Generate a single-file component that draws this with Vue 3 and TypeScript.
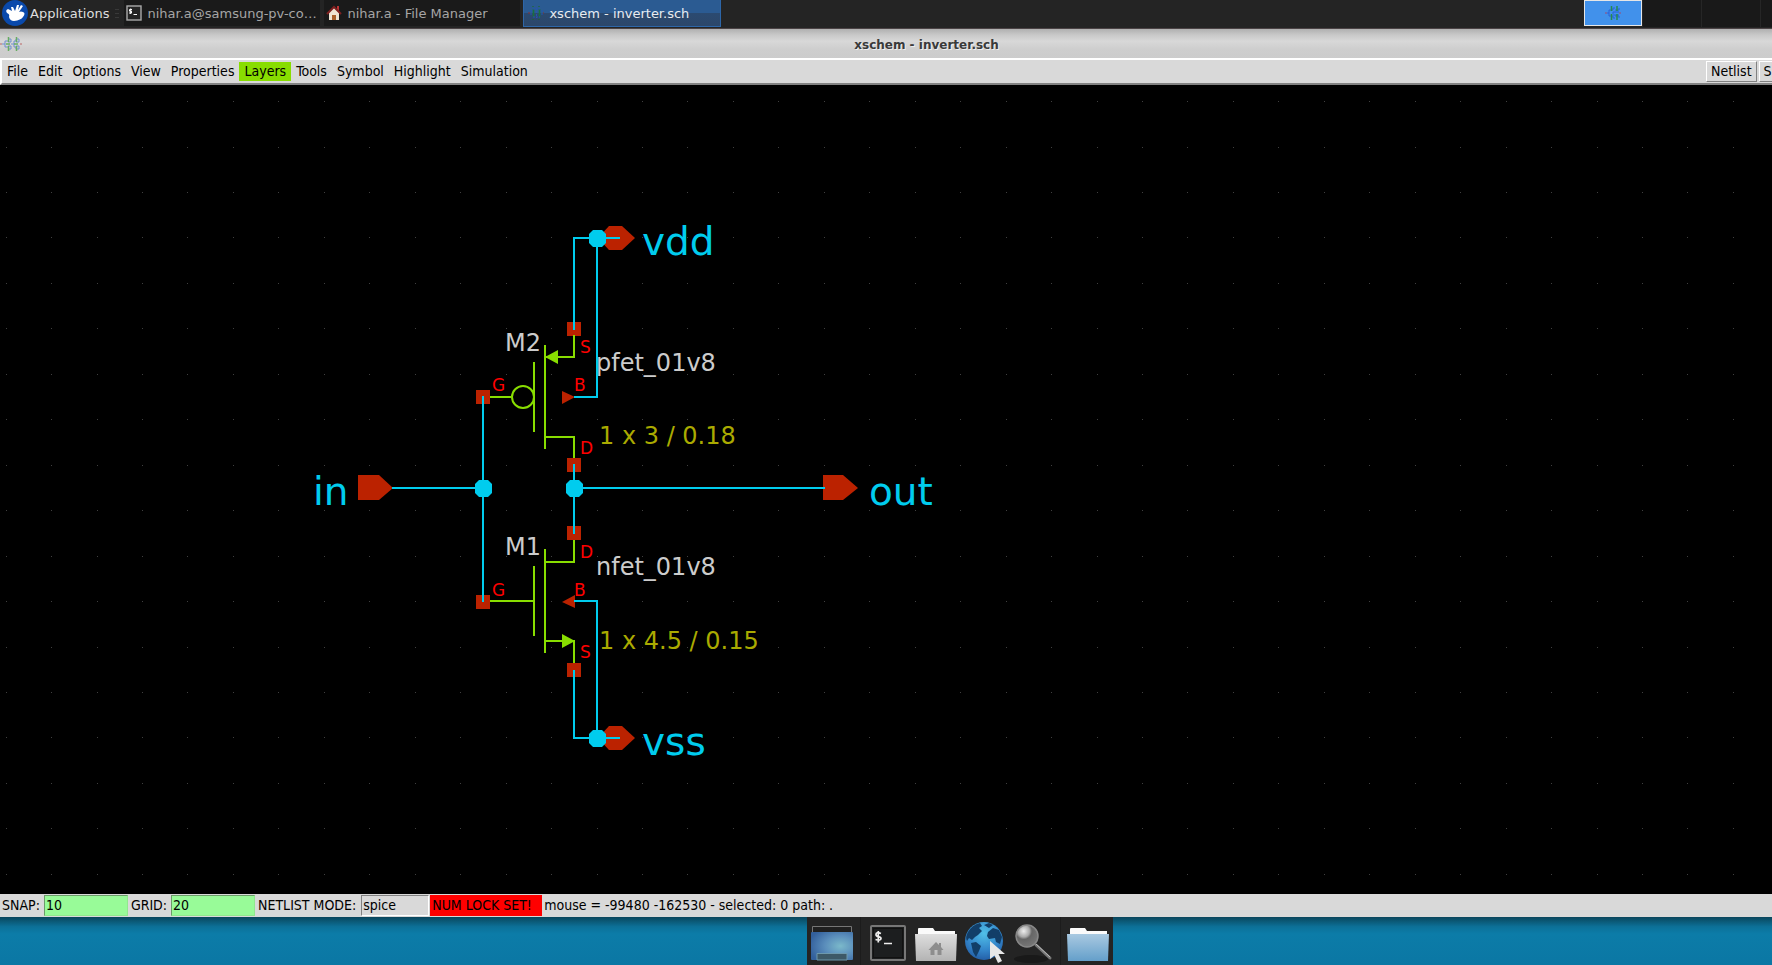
<script setup lang="ts">
interface Label { x: number; y: number; t: string; c: string }

const menus: string[] = ['File', 'Edit', 'Options', 'View', 'Properties', 'Layers', 'Tools', 'Symbol', 'Highlight', 'Simulation']

const labels: Label[] = [
  { x: 642, y: 255, t: 'vdd', c: 'net' },
  { x: 642, y: 755, t: 'vss', c: 'net' },
  { x: 313, y: 505, t: 'in', c: 'net' },
  { x: 869, y: 505, t: 'out', c: 'net' },
  { x: 505, y: 351, t: 'M2', c: 'name' },
  { x: 505, y: 555, t: 'M1', c: 'name' },
  { x: 596, y: 371, t: 'pfet_01v8', c: 'name' },
  { x: 596, y: 575, t: 'nfet_01v8', c: 'name' },
  { x: 599, y: 444, t: '1 x 3 / 0.18', c: 'size' },
  { x: 599, y: 649, t: '1 x 4.5 / 0.15', c: 'size' },
  { x: 580, y: 353, t: 'S', c: 'pin' },
  { x: 574, y: 391, t: 'B', c: 'pin' },
  { x: 492, y: 391, t: 'G', c: 'pin' },
  { x: 580, y: 454, t: 'D', c: 'pin' },
  { x: 580, y: 558, t: 'D', c: 'pin' },
  { x: 574, y: 596, t: 'B', c: 'pin' },
  { x: 492, y: 596, t: 'G', c: 'pin' },
  { x: 580, y: 658, t: 'S', c: 'pin' },
]

const pads: [number, number][] = [[567, 322], [567, 458], [476, 390], [567, 526], [567, 663], [476, 595]]
const junctions: [number, number][] = [[597, 238], [483, 488], [574, 488], [597, 738]]

const step = 500 / 11
const dots: string = Array.from({ length: 18 }, (_, r) =>
  Array.from({ length: 60 }, (_, c) => `M${Math.floor(6.1 + c * step)} ${Math.floor(101.6 + r * step)}h1v1h-1z`).join(''),
).join('')
</script>

<template>
  <div class="screen">
    <header class="panel">
      <button class="apps">
        <svg width="26" height="26" viewBox="0 0 26 26" aria-hidden="true">
          <circle cx="13" cy="13" r="13" fill="#0a49ab" />
          <path d="M6 9Q3 10 5 13Q8 14 7 17Q8 21 12 21Q19 20 21 17Q24 13 21 12Q19 11 17 12L21 6L19 5L16 10L17 5L15 5L13 11L11 7L9 7L10 11Z" fill="#fff" />
        </svg>
        <span>Applications</span>
      </button>
      <i class="grip"></i>
      <button class="task">
        <svg width="16" height="16" viewBox="0 0 16 16" aria-hidden="true">
          <rect x="1" y="1" width="14" height="14" fill="#252525" stroke="#aaa" stroke-width="1.4" />
          <path d="M6 4.5H3.500V6.200H5.500V8H3M4.700 3.500V9M7.500 9.500H11" stroke="#fff" fill="none" />
        </svg>
        <span>nihar.a@samsung-pv-co…</span>
      </button>
      <button class="task t2">
        <svg width="16" height="16" viewBox="0 0 16 16" aria-hidden="true">
          <path d="M11 1h2v5h-2z" fill="#b33" />
          <path d="M3 7L8 2L13 7V15H3Z" fill="#eee4d4" />
          <path d="M1 9L8 2L15 9" fill="none" stroke="#7e2020" stroke-width="2" />
          <path d="M6 10h4v5H6z" fill="#a8602c" />
        </svg>
        <span>nihar.a - File Manager</span>
      </button>
      <button class="task active">
        <svg width="16" height="16" viewBox="0 0 16 16" aria-hidden="true">
          <path d="M5.500 4v8M11.500 4v8" stroke="#187040" stroke-width="1.600" fill="none" />
          <path d="M3 5v6M8.500 3v10M14 5v6M5 4h7M5 12h7" stroke="#2454b0" fill="none" stroke-dasharray="2 1" />
          <path d="M5 1v1M11 1v1M5 14v1M11 14v1" stroke="#187018" />
          <path d="M0 8h2M15 8h1" stroke="#833" />
        </svg>
        <span>xschem - inverter.sch</span>
      </button>
      <div class="pager">
        <button class="ws on" aria-label="Workspace 1">
          <svg width="16" height="16" viewBox="0 0 16 16" aria-hidden="true">
            <path d="M2 8H4M4 5V11M4 5H8V3H10M4 11H8V13H10M8 7V9M10 5H14V3M10 11H14V13M8 7H14M8 10H14" stroke="#2961d8" fill="none" />
            <path d="M6.500 1V6M6.500 9V15M12 1V6M12 9V15" stroke="#268a50" stroke-width="1.500" />
            <path d="M0 8h2M14 8h2" stroke="#a34b70" />
          </svg>
        </button>
        <button class="ws" aria-label="Workspace 2"></button>
        <button class="ws" aria-label="Workspace 3"></button>
        <button class="ws last" aria-label="Workspace 4"></button>
      </div>
    </header>

    <div class="titlebar">
      <svg width="22" height="16" viewBox="0 0 22 16" aria-hidden="true">
        <path d="M2 8H5M5 5V11M5 5H8M5 11H8M8 3H11V6H8M8 10H11V13H8M11 8H14M14 5V11M14 5H16V3H19V6H16M14 11H16V13H19V10H16" stroke="#6f8fce" fill="none" />
        <path d="M8.500 1V6M8.500 10V15M16.500 1V6M16.500 10V15M6 8H10M14 8H18" stroke="#67ad62" stroke-width="1.500" />
        <path d="M0 8h2M20 8h2" stroke="#b66" />
      </svg>
      <h1>xschem - inverter.sch</h1>
    </div>

    <nav class="menubar">
      <button v-for="m in menus" :key="m" class="menu" :class="{ hot: m === 'Layers' }">{{ m }}</button>
      <div class="tools">
        <button class="raised">Netlist</button>
        <button class="raised">S</button>
      </div>
    </nav>

    <main class="canvas">
      <svg class="schematic" role="img" aria-label="Inverter schematic">
        <g transform="translate(0 -85)">
          <path :d="dots" fill="#404040" shape-rendering="crispEdges" />

          <g class="pinfill">
            <rect v-for="(p, i) in pads" :key="i" :x="p[0]" :y="p[1]" width="14" height="14" />
            <path d="M358 475H379L393 488L379 500H358Z" />
            <path d="M823 475H843L858 488L843 500H823Z" />
            <path d="M598 238L609 226H622L635 238L622 250H609Z" />
            <path d="M598 738L609 726H622L635 738L622 750H609Z" />
            <path d="M562 391L575 397L562 404Z" />
            <path d="M575 595L562 602L575 608Z" />
          </g>

          <g class="device">
            <path d="M545 345V449M534 362V432M574 335V357H545M545 437H574V458M490 397H511" />
            <circle cx="523" cy="397" r="11" />
            <path d="M545 549V653M534 566V636M574 540V562H545M545 641H574V663M490 601H534" />
          </g>
          <path d="M545 357L558 350V364ZM562 634L575 641L562 648Z" fill="#88dd00" />

          <g class="wire">
            <path d="M574 330V238H620M597 238V397H574M392 488H483M483 396V602M574 464V534M574 488H825" />
            <path d="M574 601H597V738M574 670V738H620" />
          </g>
          <path
            v-for="(j, i) in junctions" :key="'j' + i" fill="#00ccee"
            :d="`M${j[0] - 4} ${j[1] - 8}h9l4 4v9l-4 4h-9l-4 -4v-9z`"
          />

          <text v-for="(l, i) in labels" :key="'t' + i" :x="l.x" :y="l.y" :class="l.c">{{ l.t }}</text>
        </g>
      </svg>
    </main>

    <div class="status">
      <label for="snap">SNAP:</label>
      <input id="snap" type="text" value="10">
      <label for="grid">GRID:</label>
      <input id="grid" type="text" value="20">
      <label for="mode">NETLIST MODE:</label>
      <input id="mode" class="mode" type="text" value="spice" readonly>
      <span class="numlock">NUM LOCK SET!</span>
      <span class="mouse">mouse = -99480 -162530 - selected: 0 path: .</span>
    </div>

    <footer class="desktop">
      <nav class="dock">
        <button aria-label="Show desktop">
          <svg width="48" height="48" viewBox="0 0 48 48" aria-hidden="true">
            <defs>
              <radialGradient id="desk" cx=".7" cy=".5" r=".75"><stop offset="0" stop-color="#7bb9ca" /><stop offset=".5" stop-color="#5a8dbb" /><stop offset="1" stop-color="#33609c" /></radialGradient>
            </defs>
            <path d="M4.500 18V9.500H43.500V18" fill="#202020" stroke="#777" />
            <rect x="3" y="15" width="42" height="28" rx="1" fill="url(#desk)" />
            <path d="M9 43V36.500H39V43Z" fill="#3d5967" stroke="#6d98ac" />
          </svg>
        </button>
        <i class="sep"></i>
        <button aria-label="Terminal">
          <svg width="48" height="48" viewBox="0 0 48 48" aria-hidden="true">
            <rect x="7" y="9" width="34" height="34" rx="1" fill="#1c1e1f" stroke="#777" stroke-width="2" />
            <rect x="9.500" y="11.500" width="29" height="29" fill="none" stroke="#111" />
            <path d="M17 16.500Q12 14.500 12 17.500Q12 19.300 14.500 19.700Q17 20.200 17 21.500Q17 24 11.500 22.500M14.300 14V25.500M20 26.500H28" stroke="#eee" stroke-width="1.700" fill="none" />
          </svg>
        </button>
        <button aria-label="Home folder">
          <svg width="48" height="48" viewBox="0 0 48 48" aria-hidden="true">
            <defs><linearGradient id="grey" x2="0" y2="1"><stop offset="0" stop-color="#dedede" /><stop offset="1" stop-color="#b3b3b3" /></linearGradient></defs>
            <path d="M6 18V12Q6 11 7 11H21L23 14H43V18Z" fill="#fafafa" />
            <path d="M3 17H45L44 44H4Z" fill="url(#grey)" />
            <path d="M16.500 33L24 25L27 28V26H29V30L31.500 33H29.500V38H25.500V33H22.500V38H18.500V33Z" fill="#8d8d8d" />
          </svg>
        </button>
        <button aria-label="Web browser">
          <svg width="48" height="48" viewBox="0 0 48 48" aria-hidden="true">
            <defs><radialGradient id="sea" cx=".5" cy=".3" r=".7"><stop offset="0" stop-color="#51c0e8" /><stop offset=".6" stop-color="#3488cc" /><stop offset="1" stop-color="#2460a8" /></radialGradient></defs>
            <circle cx="24" cy="24" r="19" fill="url(#sea)" />
            <path d="M8 15Q12 8 20 6L22 9L19 11L22 14L18 18L15 20L12 23L9 21L7 24Q5 20 8 15ZM11 26L16 25L21 29L19 34L16 40L13 35ZM24 8L29 6L33 8L29 11ZM28 15L33 11L39 13L42 20L40 27L36 25L35 21L29 22L27 19Z" fill="#123e68" />
            <path d="M30 24V42L34.500 38.500L38 46L42 44L38.500 37H45Z" fill="#e7e7e7" />
          </svg>
        </button>
        <button aria-label="Search">
          <svg width="48" height="48" viewBox="0 0 48 48" aria-hidden="true">
            <defs><radialGradient id="lens" cx=".35" cy=".28" r=".75"><stop offset="0" stop-color="#eee" /><stop offset=".35" stop-color="#aaa" /><stop offset=".5" stop-color="#666" /><stop offset="1" stop-color="#777" /></radialGradient></defs>
            <ellipse cx="23" cy="42" rx="17" ry="4" fill="#191919" />
            <path d="M28 28L42 41" stroke="#777" stroke-width="3" stroke-linecap="round" />
            <path d="M28 27L42 40" stroke="#bbb" />
            <circle cx="19" cy="19" r="11" fill="url(#lens)" stroke="#888" stroke-width="1.500" />
          </svg>
        </button>
        <i class="sep"></i>
        <button aria-label="Files">
          <svg width="48" height="48" viewBox="0 0 48 48" aria-hidden="true">
            <defs><linearGradient id="blue" x2="0" y2="1"><stop offset="0" stop-color="#a9c9e1" /><stop offset="1" stop-color="#649fca" /></linearGradient></defs>
            <path d="M6 18V12Q6 11 7 11H21L23 14H43V18Z" fill="#fafafa" />
            <path d="M3 17H45L44 44H4Z" fill="url(#blue)" />
          </svg>
        </button>
      </nav>
    </footer>
  </div>
</template>

<style>
html, body { margin: 0; background: #0a7aa5; overflow: hidden; }
</style>

<style scoped>
.screen { min-height: 100vh; display: flex; flex-direction: column; font-family: "DejaVu Sans", sans-serif; font-size: 13px; color: #000; overflow: hidden; }
button { border: 0; margin: 0; padding: 0; background: none; font: inherit; color: inherit; white-space: nowrap; }
svg { display: block; flex: none; }

.panel { height: 29px; box-sizing: border-box; display: flex; background: #242424; border-bottom: 1px solid #4c4446; color: #dedede; }
.apps { display: flex; align-items: center; gap: 2px; height: 26px; padding-left: 2px; }
.grip { width: 4px; height: 9px; margin: 9px 5px 0 6px; background: repeating-linear-gradient(#393939 0 1px, transparent 1px 4px); }
.task { display: flex; align-items: center; gap: 5px; height: 26px; width: 196px; box-sizing: border-box; padding-left: 2px; margin-right: 4px; background: #1a1a1a; color: #a6a6a6; }
.t2 { margin-right: 3px; }
.active { width: 198px; height: 27px; padding-left: 4px; margin: 0; color: #e8ecf0; background: linear-gradient(#2b5b92 0 50%, #2b4a70 50%, #2c476a); border: solid #2d66a8; border-width: 0 1px 1px; }
.pager { margin-left: auto; display: flex; height: 27px; }
.ws { width: 59px; box-sizing: border-box; background: #191919; border-left: 1px solid #262626; }
.ws.on { display: flex; align-items: center; justify-content: center; width: 58px; height: 26px; background: #4191eb; border: 1px solid #e6e6e6; }
.ws.last { width: 12px; }

.titlebar { height: 29px; display: flex; align-items: center; background: linear-gradient(#b0b0b0, #c8c8c8 20%, #d8d8d8 42%, #cecece 70%, #cccccc); }
.titlebar h1 { flex: 1; margin: 0; padding: 2px 0 0 59px; text-align: center; font-size: 12px; line-height: 16px; color: #3a3a3a; text-shadow: 1px 1px 0 #eee; }

.menubar, .status { font-family: "DejaVu Sans Condensed", "DejaVu Sans", sans-serif; font-size: 14px; font-stretch: condensed; background: #d9d9d9; }
.menubar { height: 27px; box-sizing: border-box; display: flex; align-items: center; border: solid; border-width: 2px 0 2px 2px; border-color: #fff #fff #828282; overflow: hidden; }
.menu { height: 19px; line-height: 19px; padding: 0 5px; }
.menu.hot { background: #88dd00; }
.tools { margin-left: auto; display: flex; gap: 2px; flex: 0 0 66px; overflow: hidden; }
.raised { flex: none; height: 21px; line-height: 17px; padding: 0 4px; border: 1px solid; border-color: #fff #828282 #828282 #fff; }

.canvas { flex: 1; display: flex; background: #000; min-height: 600px; }
.schematic { width: 100%; height: auto; }
.pinfill { fill: #bb2200; }
.device { fill: none; stroke: #88dd00; stroke-width: 2; }
.wire { fill: none; stroke: #00ccee; stroke-width: 2; }
.net { font-size: 39px; fill: #00ccee; }
.name { font-size: 24px; fill: #cccccc; }
.size { font-size: 24px; fill: #aaaa00; }
.pin { font-size: 17px; fill: #ff0000; }

.status { height: 23px; display: flex; align-items: center; line-height: 21px; padding-left: 2px; white-space: nowrap; }
.status input { font: inherit; width: 84px; height: 21px; box-sizing: border-box; margin: 0 3px 0 4px; padding: 0 1px; border: 1px solid; border-color: #6c9c6a #90e88e #90e88e #6c9c6a; background: #98fb98; border-radius: 0; outline: 0; }
.status .mode { width: 68px; margin: 0 1px 0 5px; background: #d9d9d9; border-color: #828282 #fff #fff #828282; }
.numlock { width: 110px; padding-left: 2px; background: #f00; }
.mouse { padding-left: 2px; }

.desktop { height: 48px; display: flex; background: linear-gradient(#0a465c, #0c7097 20%, #0c7ca8 35%, #0b77a4); }
.dock { margin-left: 807px; display: flex; padding: 0 1px; background: #242424; }
.sep { width: 8px; background: linear-gradient(90deg, transparent 4px, #1c1c1c 4px 5px, transparent 5px); }
</style>
